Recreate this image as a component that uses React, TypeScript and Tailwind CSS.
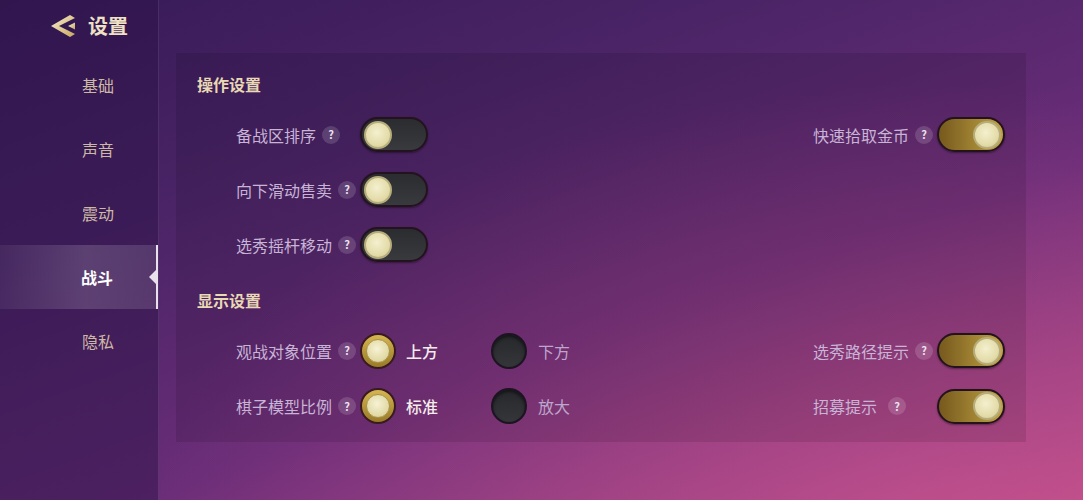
import React from "react";

const font = { fontFamily: '"Noto Sans CJK SC", "Noto Sans", sans-serif' };

const navItems = ["基础", "声音", "震动", "战斗", "隐私"];

const Help: React.FC = () => (
  <span className="flex h-[18px] w-[18px] shrink-0 items-center justify-center rounded-full bg-white/15 text-[11px] font-bold leading-none text-[#ece2ee]">
    ?
  </span>
);

const Toggle: React.FC<{ on?: boolean }> = ({ on }) => (
  <div
    className={`flex h-[35px] w-[68px] shrink-0 items-center rounded-full border-2 border-[#24121f] p-[2px] shadow-[0_1px_2px_rgba(0,0,0,0.4)] ${
      on
        ? "justify-end bg-gradient-to-r from-[#76591d] via-[#9c7f30] to-[#c2a446]"
        : "justify-start bg-gradient-to-b from-[#2a2c2f] to-[#383a3d]"
    }`}
  >
    <div className="h-[28px] w-[28px] rounded-full border-2 border-[#b7ad7c] bg-[radial-gradient(circle_at_45%_40%,#f4f0cf_0%,#e4dcaa_60%,#cfc690_100%)]" />
  </div>
);

const Radio: React.FC<{ on?: boolean }> = ({ on }) =>
  on ? (
    <div className="flex h-[36px] w-[36px] shrink-0 items-center justify-center rounded-full border-2 border-[#3a1a22] bg-gradient-to-b from-[#d6b650] to-[#9a7a26]">
      <div className="h-[24px] w-[24px] rounded-full border border-[#a8954f] bg-[radial-gradient(circle_at_45%_40%,#f6f2d4_0%,#e2d9a6_65%,#c8bd84_100%)]" />
    </div>
  ) : (
    <div className="h-[36px] w-[36px] shrink-0 rounded-full border-2 border-[#1c1420] bg-gradient-to-b from-[#26282b] to-[#34363a] shadow-[inset_0_2px_3px_rgba(0,0,0,0.5)]" />
  );

const Label: React.FC<{ text: string; wide?: boolean }> = ({ text, wide }) => (
  <div className={`flex w-[124px] shrink-0 items-center ${wide ? "gap-[11px]" : "gap-[6px]"}`}>
    <span className="whitespace-nowrap text-[16px] text-[#c8b4d6]">{text}</span>
    <Help />
  </div>
);

const RightToggle: React.FC<{ text: string; wide?: boolean }> = ({ text, wide }) => (
  <div className="flex items-center">
    <Label text={text} wide={wide} />
    <Toggle on />
  </div>
);

const RadioPair: React.FC<{ a: string; b: string }> = ({ a, b }) => (
  <div className="flex items-center">
    <div className="flex w-[131px] items-center gap-[10px]">
      <Radio on />
      <span className="text-[16px] font-medium text-[#f3ecea]">{a}</span>
    </div>
    <div className="flex items-center gap-[11px]">
      <Radio />
      <span className="text-[16px] text-[#bda6cc]">{b}</span>
    </div>
  </div>
);

const Row: React.FC<{ h?: string; children: React.ReactNode }> = ({ h = "h-[55px]", children }) => (
  <div className={`flex ${h} items-center justify-between pl-[39px]`}>{children}</div>
);

const Title: React.FC<{ text: string }> = ({ text }) => (
  <div className="flex h-[20px] items-center text-[16px] font-bold text-[#e8d8b4]">{text}</div>
);

export default function App() {
  return (
    <div
      style={font}
      className="relative flex h-[500px] w-[1083px] overflow-hidden bg-[linear-gradient(160deg,#371a57_0%,#4a2466_30%,#6a2d78_62%,#b24a86_100%)]"
    >
      <div className="pointer-events-none absolute inset-0 bg-[radial-gradient(ellipse_at_85%_110%,rgba(220,90,150,0.45),transparent_60%)]" />

      {/* sidebar */}
      <aside className="relative flex w-[159px] shrink-0 flex-col border-r border-white/10 bg-[#2a1244]/45">
        <div className="flex h-[52px] items-center pl-[51px]">
          <svg width="25" height="22" viewBox="0 0 25 22">
            <defs>
              <linearGradient id="g" x1="0" y1="0" x2="1" y2="1">
                <stop offset="0" stopColor="#f6ecd0" />
                <stop offset="1" stopColor="#c9a85e" />
              </linearGradient>
            </defs>
            <path d="M19 0 L24 3 L8 11 L24 19 L19 22 L0 11 Z" fill="url(#g)" />
            <path d="M24 7.5 L17 11 L24 14.5 Z" fill="url(#g)" />
          </svg>
          <span className="ml-[12px] text-[20px] font-bold text-[#eee1c4]">设置</span>
        </div>
        <div className="mt-[1px] flex flex-col">
          {navItems.map((n) =>
            n === "战斗" ? (
              <div
                key={n}
                className="relative flex h-[64px] items-center justify-center border-r-2 border-[#e9e2ec] bg-[linear-gradient(90deg,rgba(255,255,255,0.06),rgba(255,255,255,0.16)_55%,rgba(255,255,255,0.12))] pl-[38px]"
              >
                <span className="text-[16px] font-bold text-white">{n}</span>
                <div className="absolute right-0 top-1/2 h-0 w-0 -translate-y-1/2 border-y-[7px] border-r-[7px] border-y-transparent border-r-[#e9e2ec]" />
              </div>
            ) : (
              <div key={n} className="flex h-[64px] items-center justify-center pl-[38px]">
                <span className="text-[16px] text-[#cdb8a6]">{n}</span>
              </div>
            )
          )}
        </div>
      </aside>

      {/* content */}
      <main className="relative flex-1 pl-[17px] pt-[53px]">
        <section className="h-[389px] w-[850px] bg-black/10 px-[21px] pt-[21px]">
          <Title text="操作设置" />
          <div className="mt-[13px]">
            <Row>
              <div className="flex items-center">
                <Label text="备战区排序" />
                <Toggle />
              </div>
              <RightToggle text="快速拾取金币" />
            </Row>
            <Row>
              <div className="flex items-center">
                <Label text="向下滑动售卖" />
                <Toggle />
              </div>
            </Row>
            <Row>
              <div className="flex items-center">
                <Label text="选秀摇杆移动" />
                <Toggle />
              </div>
            </Row>
          </div>
          <div className="mt-[18px]">
            <Title text="显示设置" />
          </div>
          <div className="mt-[13px]">
            <Row>
              <div className="flex items-center">
                <Label text="观战对象位置" />
                <RadioPair a="上方" b="下方" />
              </div>
              <RightToggle text="选秀路径提示" />
            </Row>
            <Row h="h-[56px]">
              <div className="flex items-center">
                <Label text="棋子模型比例" />
                <RadioPair a="标准" b="放大" />
              </div>
              <RightToggle text="招募提示" wide />
            </Row>
          </div>
        </section>
      </main>
    </div>
  );
}
